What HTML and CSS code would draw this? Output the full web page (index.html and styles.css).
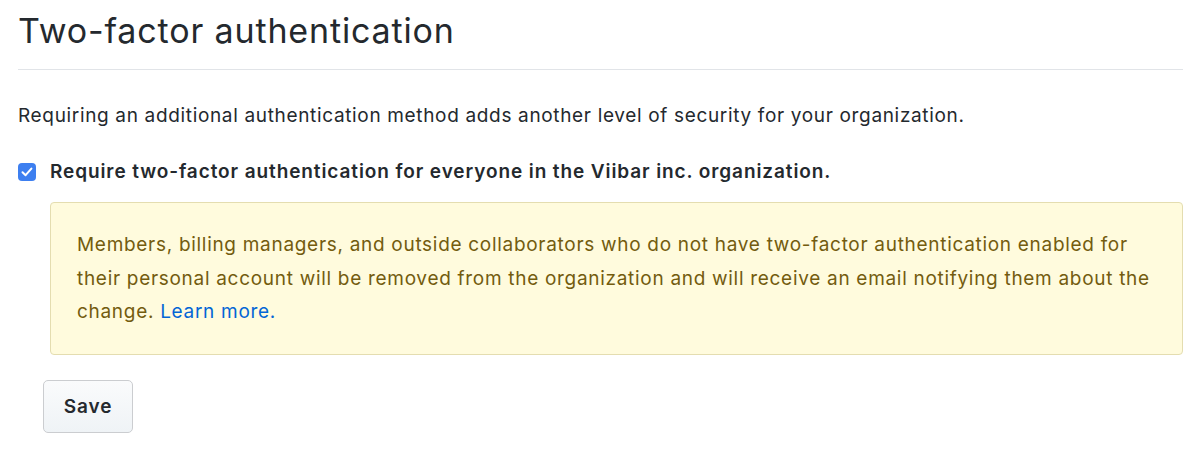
FILE: index.html
```html
<!DOCTYPE html>
<html>
<head>
<meta charset="utf-8">
<link rel="stylesheet" href="styles.css">
</head>
<body>
<div class="page">
  <div class="subhead">
    <h2 class="subhead-title">Two-factor authentication</h2>
  </div>
  <p class="lead">Requiring an additional authentication method adds another level of security for your organization.</p>
  <label class="check-row">
    <span class="checkbox">
      <svg viewBox="0 0 18 18" width="18" height="18"><path d="M4.5 9.2 L7.6 12.2 L13.4 5.6" fill="none" stroke="#fff" stroke-width="2" stroke-linecap="round" stroke-linejoin="round"/></svg>
    </span>
    <span class="check-label">Require two-factor authentication for everyone in the Viibar inc. organization.</span>
  </label>
  <div class="flash">
    Members, billing managers, and outside collaborators who do not have two-factor authentication enabled for their personal account will be removed from the organization and will receive an email notifying them about the change. <a href="#" class="link">Learn more.</a>
  </div>
  <button class="btn">Save</button>
</div>
</body>
</html>
```
FILE: styles.css
```css
html, body {
  margin: 0;
  padding: 0;
  background: #fff;
}
body {
  font-family: Inter, "Liberation Sans", Arial, sans-serif;
  color: #24292e;
}
.page {
  padding: 0 17px 0 18px;
}
.subhead {
  border-bottom: 1px solid #e1e4e8;
  padding-top: 10px;
  padding-bottom: 17px;
}
.subhead-title {
  margin: 0;
  font-size: 34px;
  font-weight: 400;
  line-height: 42px;
  letter-spacing: 0.85px;
}
.lead {
  margin: 32px 0 0;
  font-size: 19px;
  line-height: 28px;
  letter-spacing: 0.66px;
}
.check-row {
  display: flex;
  align-items: center;
  margin-top: 28px;
}
.checkbox {
  width: 18px;
  height: 18px;
  border-radius: 4px;
  background: #3d7ff0;
  display: flex;
  align-items: center;
  justify-content: center;
  flex: none;
}
.checkbox svg { display: block; }
.check-label {
  margin-left: 14px;
  font-size: 19px;
  font-weight: 600;
  line-height: 28px;
  letter-spacing: 0.9px;
}
.flash {
  margin: 16px 0 0 32px;
  padding: 25px 26px;
  background: #fffbdd;
  border: 1px solid #e4ddb0;
  border-radius: 4px;
  color: #735c0f;
  font-size: 19px;
  line-height: 33.5px;
  letter-spacing: 0.7px;
}
.link {
  color: #0366d6;
  text-decoration: none;
}
.btn {
  margin: 25px 0 0 25px;
  width: 90px;
  height: 53px;
  font-family: inherit;
  font-size: 19px;
  font-weight: 600;
  letter-spacing: 0.9px;
  color: #24292e;
  background: linear-gradient(#fafbfc, #eff3f6);
  border: 1px solid #cbcdd0;
  border-radius: 5px;
}
```
